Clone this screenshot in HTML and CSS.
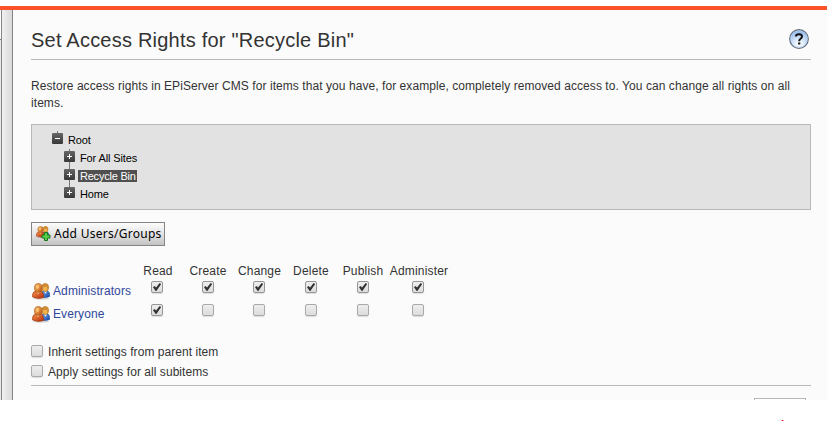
FILE: index.html
```html
<!DOCTYPE html>
<html lang="en">
<head>
<meta charset="utf-8">
<title>Set Access Rights</title>
<link rel="stylesheet" href="styles.css">
</head>
<body>
<svg class="defs" aria-hidden="true">
  <defs>
    <linearGradient id="orange" x1="0" y1="0" x2="1" y2="1"><stop offset="0" stop-color="#f5b765"/><stop offset=".5" stop-color="#e28c38"/><stop offset="1" stop-color="#b94b17"/></linearGradient>
    <linearGradient id="red" x1="0" y1="0" x2="1" y2="1"><stop offset="0" stop-color="#f4944c"/><stop offset="1" stop-color="#b92c0b"/></linearGradient>
    <linearGradient id="blue" x1="0" y1="0" x2="1" y2="1"><stop offset="0" stop-color="#74a9ef"/><stop offset="1" stop-color="#174ba9"/></linearGradient>
    <radialGradient id="help" cx=".5" cy=".8" r=".75"><stop offset="0" stop-color="#fff"/><stop offset=".4" stop-color="#dceafa"/><stop offset="1" stop-color="#8db5e8"/></radialGradient>
    <symbol id="users" viewBox="0 0 18 17">
      <ellipse cx="9" cy="15.500" rx="8.300" ry="1.200" fill="#aaa" opacity=".5"/>
      <path d="M9.500 14V9.500Q10.500 7.500 13 7.500Q17.500 7.500 17.500 11.500V13.500Q14 15 9.500 14Z" fill="url(#blue)" stroke="#174693" stroke-width=".7"/>
      <path d="M12 8L13.500 11L15 8Z" fill="#e8f2ff"/>
      <ellipse cx="13.200" cy="4.500" rx="3.400" ry="4" fill="#f0b550" stroke="#b06a1c" stroke-width=".7"/>
      <path d="M10 4Q10 .7 13 .7Q16.700 .7 16.500 5L15.500 6.500L14.500 3.500Q12.500 4.500 10 4Z" fill="#cf8a34"/>
      <path d="M.6 14V11.500Q.8 8.300 4.500 8H7.500Q11.400 8.300 11.500 12V14.500Q6 16.500 .6 14Z" fill="url(#red)" stroke="#a43b13" stroke-width=".7"/>
      <path d="M4.500 8L6 11.500L8 8Z" fill="#f8c28a"/>
      <ellipse cx="6.300" cy="4.900" rx="3.800" ry="4.300" fill="url(#orange)" stroke="#a85a1c" stroke-width=".7"/>
      <ellipse cx="5.500" cy="4" rx="1.500" ry="2" fill="#ffd18b" opacity=".75"/>
    </symbol>
  </defs>
</svg>
<div class="topbar"></div>
<div class="app">
  <div class="tree-pane"></div>
  <div class="splitter"></div>
  <main class="content">
    <header class="head">
      <h1>Set Access Rights for "Recycle Bin"</h1>
      <svg class="help" viewBox="0 0 20 20"><circle cx="10" cy="10" r="9.300" fill="url(#help)" stroke="#626b78" stroke-width="1.200"/><circle cx="10" cy="10" r="8.300" fill="none" stroke="#b7d2f4" stroke-width=".7"/><path d="M6.900 7.500Q7.100 5.200 10 5.200Q13 5.200 13 7.600Q13 9 11.300 10Q10.200 10.700 10.200 12.300" fill="none" stroke="#111" stroke-width="2"/><rect x="9.100" y="13.500" width="2.200" height="2" fill="#111"/></svg>
    </header>
    <p class="intro">Restore access rights in EPiServer CMS for items that you have, for example, completely removed access to. You can change all rights on all items.</p>
    <div class="tree">
      <div class="node root"><i class="toggle minus"></i><span>Root</span></div>
      <div class="node first"><i class="toggle"></i><span>For All Sites</span></div>
      <div class="node"><i class="toggle"></i><span class="selected">Recycle Bin</span></div>
      <div class="node"><i class="toggle"></i><span>Home</span></div>
    </div>
    <button class="add">
      <svg class="add-icon" viewBox="0 0 15 15"><use href="#users" width="13" height="12.300"/><path d="M8.500 6.500H11.500V9H14V12H11.500V14.500H8.500V12H6V9H8.500Z" fill="#58cf4a" stroke="#16771c"/></svg>
      <span>Add Users/Groups</span>
    </button>
    <div class="rights labels"><span></span><span>Read</span><span>Create</span><span>Change</span><span>Delete</span><span>Publish</span><span>Administer</span></div>
    <div class="rights">
      <span class="name"><svg class="users"><use href="#users"/></svg>Administrators</span>
      <i class="box on"></i><i class="box on"></i><i class="box on"></i><i class="box on"></i><i class="box on"></i><i class="box on"></i>
    </div>
    <div class="rights">
      <span class="name"><svg class="users"><use href="#users"/></svg>Everyone</span>
      <i class="box on"></i><i class="box"></i><i class="box"></i><i class="box"></i><i class="box"></i><i class="box"></i>
    </div>
    <div class="options">
      <label><i class="box"></i><span>Inherit settings from parent item</span></label>
      <label><i class="box"></i><span>Apply settings for all subitems</span></label>
    </div>
    <div class="actions"><div class="save"></div></div>
  </main>
</div>
<div class="below"><i class="mark"></i></div>
</body>
</html>
```
FILE: styles.css
```css
* { box-sizing: border-box; }
body { margin: 0; background: #fff; color: #333; font: 12px "Liberation Sans", Arial, sans-serif; overflow: hidden; }
.defs { position: absolute; width: 0; height: 0; }
.topbar { height: 10px; border-top: 6px solid #fff; background: #fa5229; background-clip: padding-box; }
.app { display: flex; height: 390px; overflow: hidden; background: #fbfbfb; }
.tree-pane { width: 1px; background: linear-gradient(#fff 29px, #777 29px, #777 30px, #e8e8e8 30px); }
.splitter { width: 12px; border-left: 1px solid #858585; border-right: 1px solid #858585; background: linear-gradient(90deg, #f1f1f1, #d8d8d8); }
.content { width: 814px; padding: 0 16px 0 18px; }
.head { display: flex; justify-content: space-between; height: 50px; padding: 19px 2px 0 0; border-bottom: 1px solid #b8b8b8; }
h1 { margin: 0; font-size: 20px; line-height: 23px; font-weight: 400; letter-spacing: .22px; white-space: nowrap; }
.help { width: 20px; height: 20px; }
.intro { height: 34px; margin: 18px 0 12px; line-height: 17px; letter-spacing: .066px; }
.tree { height: 86px; padding: 6px 0 0 20px; border: 1px solid #b8b8b8; background: #e2e2e2; color: #000; font-size: 11px; letter-spacing: -.12px; }
.node { position: relative; display: flex; align-items: center; height: 18px; padding-left: 12px; }
.node.root { padding-left: 0; }
.node span { margin-left: 3px; padding: 0 2px; line-height: 13px; }
.node .selected { height: 12px; padding-right: 1px; line-height: 12px; letter-spacing: -.22px; background: #505050; color: #fff; }
.toggle { position: relative; width: 11px; height: 11px; margin-top: -3px; border-radius: 1px; background: linear-gradient(#666, #383838); }
.toggle::before { content: ""; position: absolute; left: 3px; top: 5px; width: 5px; height: 1px; background: #fff; }
.toggle::after { content: ""; position: absolute; left: 5px; top: 3px; width: 1px; height: 5px; background: #fff; }
.minus::after { display: none; }
.node::before { content: ""; position: absolute; left: 17px; top: -5px; width: 1px; height: 8px; background: #777; }
.node.first::before { top: 0; height: 3px; }
.node.root::before { left: 5px; top: 0; height: 2px; }
.add { display: flex; align-items: center; width: 134px; height: 24px; margin: 12px 0 15px; padding: 0 0 1px 4px; border: 1px solid #858585; background: linear-gradient(#fcfcfc, #e4e4e4 50%, #c2c2c2); color: #000; font: 400 12px "Noto Sans", sans-serif; white-space: nowrap; }
.add-icon { flex: none; width: 15px; height: 15px; margin-right: 3px; }
.add span { letter-spacing: .27px; }
.rights { display: grid; grid-template-columns: 103px 48px 52px 51px 52px 52px 60px; justify-items: center; height: 23px; line-height: 14px; }
.labels { height: 20px; padding-top: 3px; letter-spacing: .18px; white-space: nowrap; }
.rights:not(.labels) { grid-template-columns: 102px 48px 54px 48px 56px 48px 62px; }
.name { display: flex; justify-self: start; align-items: flex-start; color: #30479c; letter-spacing: .1px; padding-top: 3px; }
.users { width: 18px; height: 17px; margin: -1px 3px 0 1px; }
.box { flex: none; width: 12px; height: 12px; border: 1px solid #a9a9a9; border-radius: 2px; background: linear-gradient(#eee, #dcdcdc); box-shadow: 0 1px 1px #ddd; }
.on { border-color: #969696; position: relative; }
.on::after { content: ""; position: absolute; inset: 0; background: #333; clip-path: polygon(1px 5.2px, 2.500px 4px, 4.100px 5.600px, 7.600px 1px, 9.200px 2.100px, 4.400px 9px, 3.700px 9px); }
.options { height: 58px; padding-top: 18px; }
.options label { display: flex; height: 20px; align-items: flex-start; }
.options span { margin-left: 5px; line-height: 14px; letter-spacing: .05px; }
.actions { display: flex; justify-content: flex-end; height: 15px; padding: 12px 5px 0 0; border-top: 1px solid #b8b8b8; }
.save { width: 52px; height: 24px; border: 1px solid #b8b8b8; background: #fff; }
.below { height: 21px; padding: 20px 0 0 782px; }
.mark { display: block; width: 1px; height: 1px; background: #f00; box-shadow: -1px 0 #ffb0b0, 1px 0 #ffb0b0; }
```
